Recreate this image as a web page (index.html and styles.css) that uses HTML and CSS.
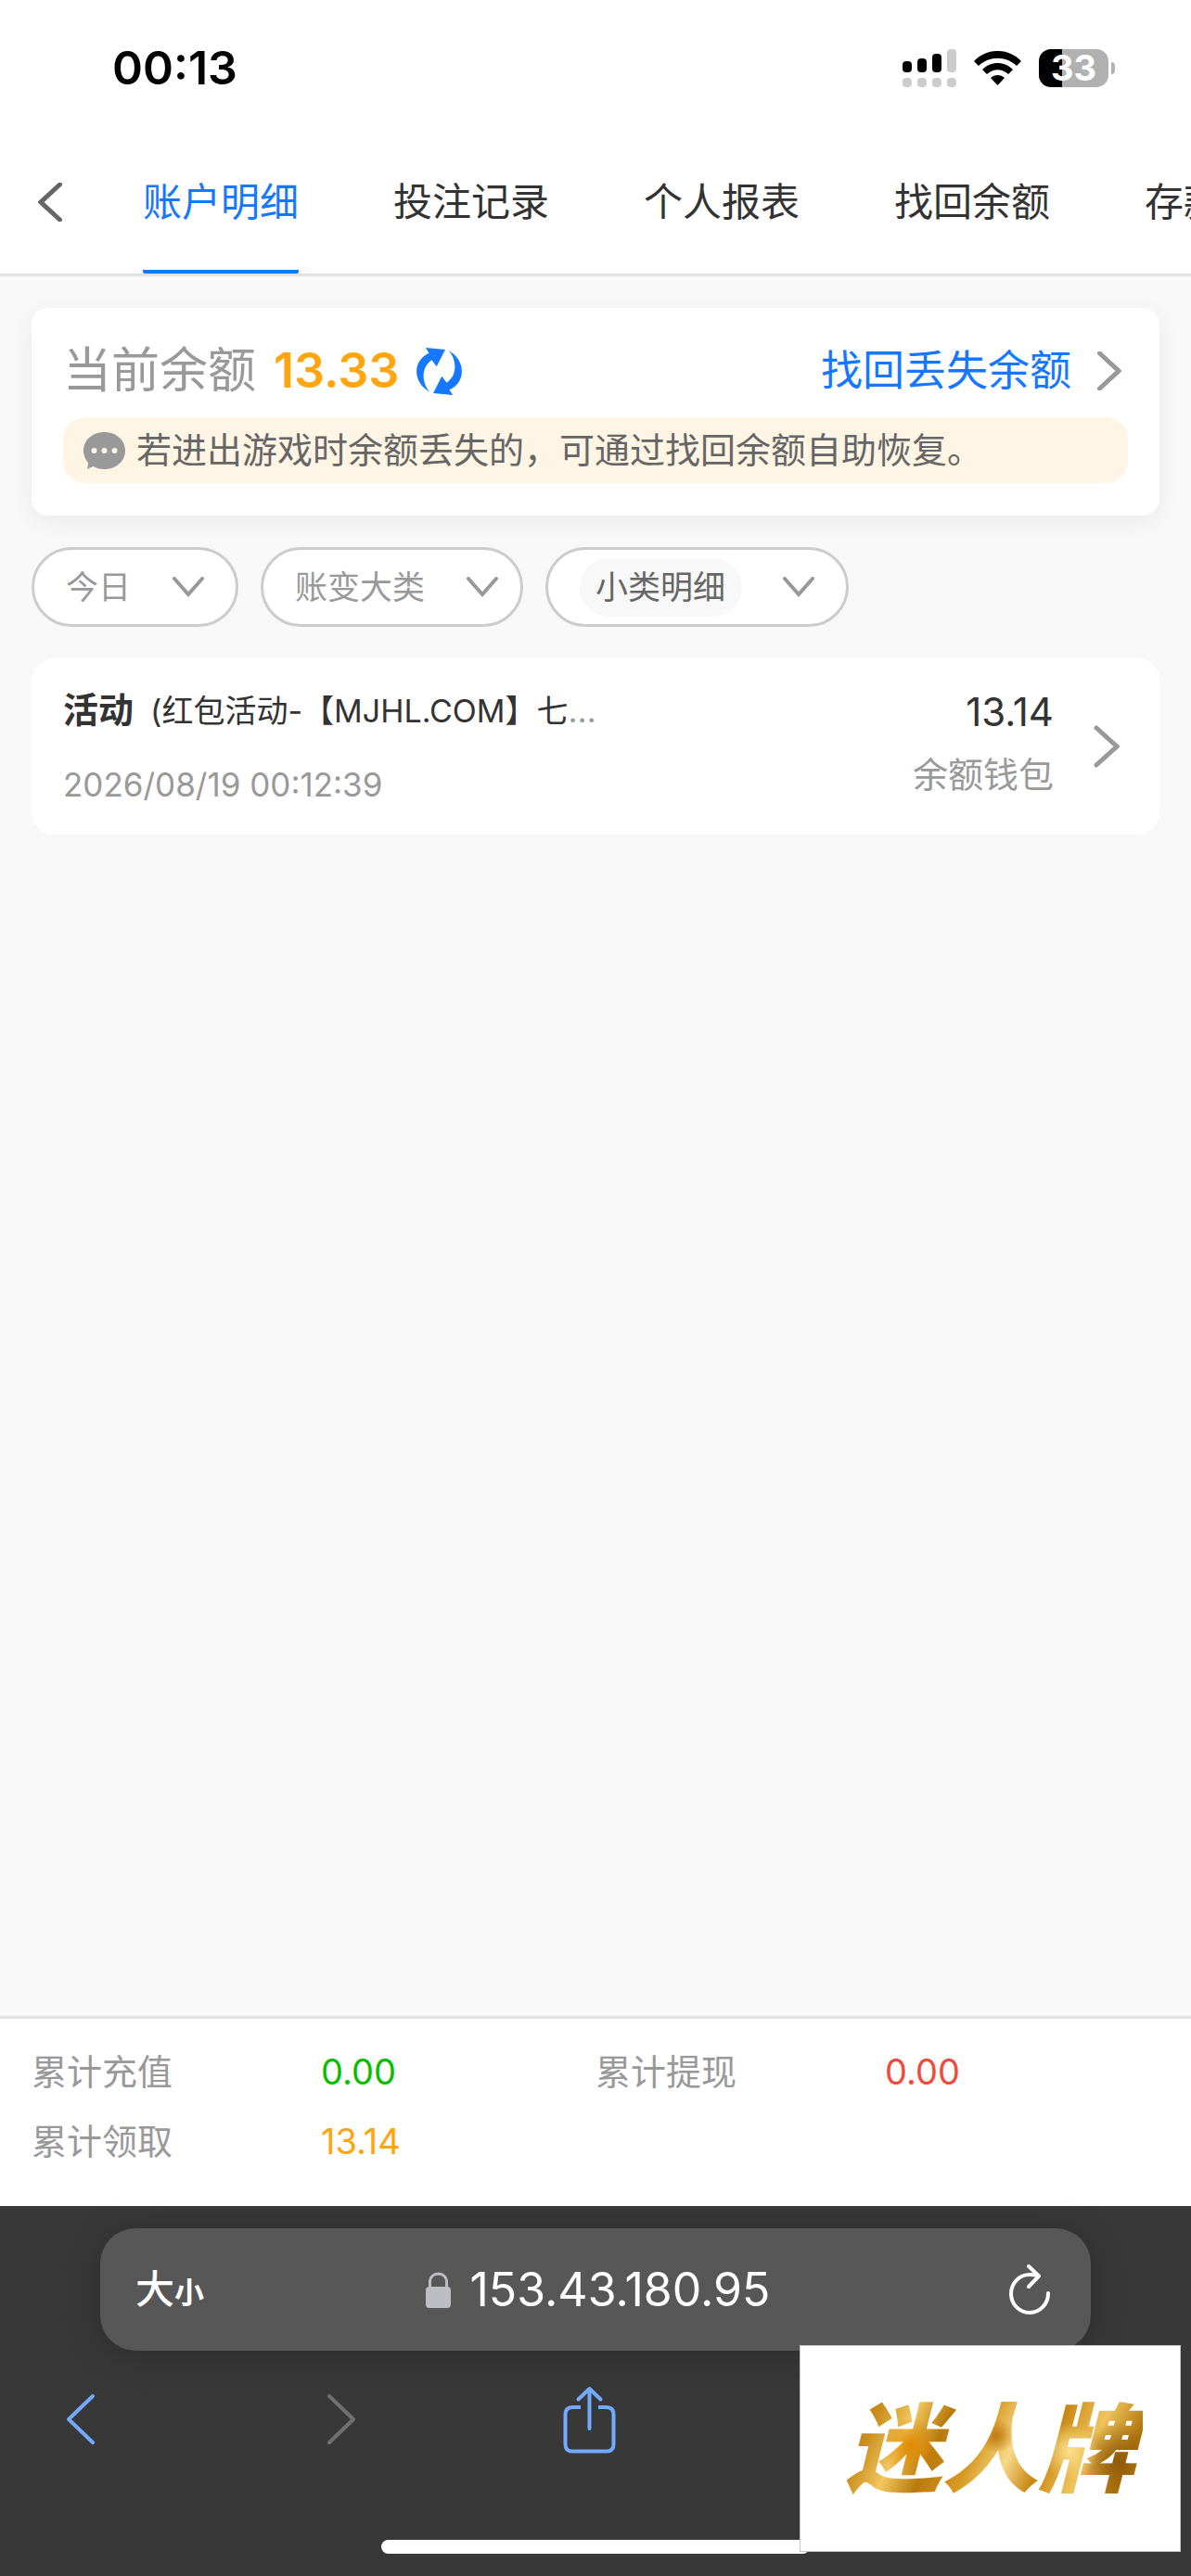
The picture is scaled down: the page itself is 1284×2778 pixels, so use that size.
FILE: index.html
```
<!DOCTYPE html>
<html lang="zh-CN">
<head>
  <meta charset="UTF-8">
  <meta name="viewport" content="width=device-width, initial-scale=1.0">
  <title>账户明细</title>
  <link rel="stylesheet" href="styles.css">
</head>
<body>

<header class="header">
  <div class="status-bar">
    <span class="time">00:13</span>
    <div class="status-icons">
      <svg width="58" height="41" viewBox="0 0 58 41">
        <rect x="0" y="13" width="10" height="12" rx="4"/>
        <rect x="16" y="10" width="10" height="15" rx="4"/>
        <rect x="32" y="5" width="10" height="20" rx="4"/>
        <g fill="#ccc">
          <rect x="48" y="0" width="10" height="25" rx="4"/>
          <rect x="0" y="31" width="10" height="10" rx="4"/>
          <rect x="16" y="31" width="10" height="10" rx="4"/>
          <rect x="32" y="31" width="10" height="10" rx="4"/>
          <rect x="48" y="31" width="10" height="10" rx="4"/>
        </g>
      </svg>
      <svg class="wifi" width="51" height="37" viewBox="0 0 51 37">
        <path d="M0 11C14-3.700 37-3.700 51 11L46 16C34.500 5 16.500 5 5 16Z"/>
        <path d="M9 20C18 10.500 33 10.500 42 20L37 25C30.500 18.500 20.500 18.500 14 25Z"/>
        <path d="M18 29C22 25 29 25 33 29L25.500 37Z"/>
      </svg>
      <div class="battery"><span>33</span></div>
    </div>
  </div>
  <nav class="tabs">
    <button class="back" type="button" aria-label="返回">
      <svg width="26" height="42" viewBox="0 0 26 42"><path d="M23.500 2L3 21L23.500 40"/></svg>
    </button>
    <a class="tab active" href="#">账户明细</a>
    <a class="tab" href="#">投注记录</a>
    <a class="tab" href="#">个人报表</a>
    <a class="tab" href="#">找回余额</a>
    <a class="tab" href="#">存款记录</a>
  </nav>
</header>

<main class="content">
  <section class="balance-card">
    <div class="balance-row">
      <span class="balance-label">当前余额</span>
      <span class="balance-value">13.33</span>
      <button class="refresh" type="button" aria-label="刷新">
        <svg width="49" height="51" viewBox="0 0 49 51" fill="#1677ff">
          <path d="M9.800 0L31 2L21.700 20.300L16.400 13.300C4 22 6 39 14.300 47.700C-4 38-5 14 13.500 5.700Z"/>
          <path transform="rotate(180 24.500 25.500)" d="M9.800 0L31 2L21.700 20.300L16.400 13.300C4 22 6 39 14.300 47.700C-4 38-5 14 13.500 5.700Z"/>
        </svg>
      </button>
      <a class="find-link" href="#">
        找回丢失余额
        <svg class="arrow" width="26" height="42" viewBox="0 0 26 42"><path d="M2.500 2L23 21L2.500 40"/></svg>
      </a>
    </div>
    <p class="notice">
      <svg width="45" height="40" viewBox="0 0 45 40">
        <path fill="#999" d="M22.500 0C35 0 45 8.500 45 20S35 40 22.500 40C18 40 14 39 10.500 37Q7 38 4 40Q5 36 5 33C2 29.500 0 25 0 20C0 8.500 10 0 22.500 0Z"/>
        <g fill="#fff5e5"><circle cx="11.500" cy="20" r="3"/><circle cx="22.500" cy="20" r="3"/><circle cx="33.500" cy="20" r="3"/></g>
      </svg>
      <span>若进出游戏时余额丢失的，可通过找回余额自助恢复。</span>
    </p>
  </section>

  <form class="filters">
    <div class="filter">
      <select aria-label="日期"><option>今日</option></select>
      <svg class="arrow" width="34" height="22" viewBox="0 0 34 22"><path d="M2 2L17 19L32 2"/></svg>
    </div>
    <div class="filter filter-type">
      <select aria-label="账变大类"><option>账变大类</option></select>
      <svg class="arrow" width="34" height="22" viewBox="0 0 34 22"><path d="M2 2L17 19L32 2"/></svg>
    </div>
    <div class="filter filter-tag">
      <select aria-label="小类明细"><option>小类明细</option></select>
      <svg class="arrow" width="34" height="22" viewBox="0 0 34 22"><path d="M2 2L17 19L32 2"/></svg>
    </div>
  </form>

  <a class="record" href="#">
    <div class="record-info">
      <div class="record-title"><b>活动</b><span class="desc">(红包活动-【MJHL.COM】七</span><span>…</span></div>
      <div class="record-time">2026/08/19 00:12:39</div>
    </div>
    <div class="record-amount">
      <div class="amount">13.14</div>
      <div class="wallet">余额钱包</div>
    </div>
    <svg class="arrow" width="28" height="46" viewBox="0 0 28 46"><path d="M3 3L25 23L3 43"/></svg>
  </a>
</main>

<dl class="totals">
  <div class="total"><dt>累计充值</dt><dd class="green">0.00</dd></div>
  <div class="total"><dt>累计提现</dt><dd class="red">0.00</dd></div>
  <div class="total"><dt>累计领取</dt><dd class="orange">13.14</dd></div>
</dl>

<footer class="browser">
  <div class="address-bar">
    <button class="text-size" type="button">大<small>小</small></button>
    <button class="domain" type="button">
      <svg width="27" height="39" viewBox="0 0 27 39">
        <rect y="16" width="27" height="23" rx="4" fill="#bdbdc4"/>
        <path d="M4.500 18V11C4.500-1 22.500-1 22.500 11V18" fill="none" stroke="#bdbdc4" stroke-width="3"/>
      </svg>
      153.43.180.95
    </button>
    <button class="reload" type="button" aria-label="重新载入">
      <svg width="44" height="54" viewBox="0 0 44 54"><path d="M31 12Q26 11 22 11A20 20.500 0 1 0 42 31M21 2L32 12.500L21 24"/></svg>
    </button>
  </div>
  <div class="toolbar">
    <button type="button" aria-label="后退">
      <svg width="32" height="56" viewBox="0 0 32 56"><path d="M29 3L3 28L29 53"/></svg>
    </button>
    <button class="disabled" type="button" aria-label="前进" disabled>
      <svg width="32" height="56" viewBox="0 0 32 56"><path d="M3 3L29 28L3 53"/></svg>
    </button>
    <button type="button" aria-label="分享">
      <svg width="57" height="73" viewBox="0 0 57 73"><path d="M28.500 46V3M16.500 14.500L28.500 3L40.500 14.500" /><path stroke-linecap="butt" d="M19 23H10Q2.500 23 2.500 31V63Q2.500 70.500 10 70.500H47Q54.500 70.500 54.500 63V31Q54.500 23 47 23H38"/></svg>
    </button>
  </div>
  <div class="home-indicator"></div>
  <div class="brand"><span>迷人牌</span></div>
</footer>

</body>
</html>
```

FILE: styles.css
```
* {
  box-sizing: border-box;
}

body {
  margin: 0;
  min-height: 100vh;
  display: flex;
  flex-direction: column;
  overflow-x: hidden;
  background: #f8f8f8;
  color: #333;
  font-family: Inter, "Noto Sans CJK SC", sans-serif;
  font-size: 38px;
  line-height: 1.2;
}

a {
  color: inherit;
  text-decoration: none;
}

button,
select {
  padding: 0;
  border: none;
  background: none;
  color: inherit;
  font: inherit;
}

svg {
  display: block;
  flex: none;
}

.arrow {
  fill: none;
  stroke: #999;
  stroke-width: 5;
  stroke-linecap: round;
}

/* header */
.header {
  background: #fff;
  border-bottom: 3px solid #e2e2e2;
}

.status-bar {
  display: flex;
  justify-content: space-between;
  align-items: center;
  height: 140px;
  padding: 6px 82px 0 121px;
  color: #000;
}

.time {
  font-size: 50px;
  font-weight: 600;
}

.status-icons {
  display: flex;
  align-items: center;
  gap: 19px;
}

.battery {
  position: relative;
  width: 75px;
  height: 41px;
  margin-right: 7px;
  border-radius: 13px;
  background: linear-gradient(to right, #000 33%, #b1b1b1 33%);
  color: #fff;
  font-size: 38px;
  font-weight: 700;
  line-height: 41px;
  text-align: center;
}

.battery::after {
  content: "";
  position: absolute;
  right: -7px;
  top: 14px;
  width: 4px;
  height: 13px;
  border-radius: 0 4px 4px 0;
  background: #b1b1b1;
}

.tabs {
  display: flex;
  gap: 102px;
  height: 155px;
  padding-left: 41px;
  overflow: hidden;
}

.back {
  margin-right: -15px;
}

.back svg {
  fill: none;
  stroke: #666;
  stroke-width: 5;
  stroke-linecap: round;
}

.tab {
  flex: none;
  border-bottom: 4px solid transparent;
  border-radius: 2px;
  font-size: 42px;
  line-height: 155px;
}

.tab.active {
  border-color: #1677ff;
  color: #1677ff;
}

/* content */
.content {
  flex: 1;
  display: flex;
  flex-direction: column;
  gap: 34px;
  padding: 34px;
}

.balance-card {
  padding: 26px 34px 35px;
  border-radius: 18px;
  background: #fff;
  box-shadow: 0 6px 24px rgba(0, 0, 0, 0.06);
}

.balance-row {
  display: flex;
  align-items: center;
  height: 84px;
}

.balance-label {
  margin-right: 19px;
  color: #999;
  font-size: 52px;
}

.balance-value {
  margin-right: 19px;
  color: #ffa50f;
  font-size: 52px;
  font-weight: 600;
}

.find-link {
  display: flex;
  align-items: center;
  gap: 28px;
  margin-left: auto;
  padding-right: 7px;
  color: #1677ff;
  font-size: 45px;
}

.notice {
  display: flex;
  align-items: center;
  gap: 12px;
  height: 71px;
  margin: 8px 0 0;
  padding: 0 22px;
  border-radius: 24px;
  background: #fff5e5;
  color: #666;
}

.filters {
  display: flex;
  gap: 24px;
}

.filter {
  display: flex;
  align-items: center;
  gap: 44px;
  height: 86px;
  padding: 0 34px;
  border: 3px solid #ccc;
  border-radius: 43px;
  background: #fff;
  color: #999;
  font-size: 35px;
}

.filter .arrow {
  stroke-width: 4;
}

.filter select {
  appearance: none;
  height: 63px;
}

.filter-type {
  padding-right: 24px;
}

.filter-tag select {
  padding: 0 17px;
  border-radius: 32px;
  background: #f8f8f8;
  color: #666;
}

.record {
  display: flex;
  padding: 30px 43px 30px 34px;
  border-radius: 24px;
  background: #fff;
}

.record-info {
  flex: 1;
  color: #999;
  font-size: 35px;
}

.record-title {
  margin-bottom: 30px;
  line-height: 50px;
}

.record-title b {
  margin-right: 18px;
  color: #333;
  font-size: 38px;
}

.desc {
  color: #333;
  font-size: 34px;
}

.record-time {
  line-height: 48px;
}

.record-amount {
  margin-right: 43px;
  text-align: right;
}

.amount {
  margin-bottom: 14px;
  font-size: 42px;
  line-height: 56px;
}

.wallet {
  color: #999;
  line-height: 50px;
}

.record .arrow {
  align-self: center;
}

/* totals */
.totals {
  display: grid;
  grid-template-columns: 1fr 1fr;
  margin: 0;
  padding: 20px 34px 32px;
  border-top: 3px solid #e2e2e2;
  background: #fff;
  line-height: 75px;
}

.total {
  display: flex;
}

.total dt {
  width: 312px;
  color: #999;
}

.total dd {
  margin: 0;
}

.green { color: #09be00; }
.red { color: #ee4b3c; }
.orange { color: #ffa50f; }

/* browser bar */
.browser {
  position: relative;
  padding: 24px 0;
  background: #383838;
  color: #fff;
}

.address-bar {
  display: grid;
  grid-template-columns: 1fr auto 1fr;
  align-items: center;
  height: 132px;
  margin: 0 108px;
  padding: 0 32px 0 38px;
  border-radius: 38px;
  background: #575757;
  box-shadow: 0 4px 40px rgba(0, 0, 0, 0.2);
}

.text-size {
  justify-self: start;
  font-size: 42px;
  font-weight: 500;
}

.text-size small {
  font-size: 32px;
  font-weight: 700;
}

.domain {
  display: flex;
  align-items: center;
  gap: 20px;
  font-size: 50px;
}

.reload {
  justify-self: end;
  margin-right: 12px;
}

.reload svg,
.toolbar svg {
  fill: none;
  stroke: currentColor;
  stroke-width: 4;
  stroke-linecap: round;
  stroke-linejoin: round;
}

.toolbar {
  display: grid;
  grid-template-columns: 22fr 20fr 53fr;
  justify-items: start;
  align-items: center;
  height: 148px;
  padding-left: 71px;
  color: #74aaff;
}

.toolbar .disabled {
  color: #707070;
}

.home-indicator {
  width: 36%;
  height: 15px;
  margin: 56px auto 0;
  border-radius: 8px;
  background: #fff;
}

.brand {
  position: absolute;
  right: 11px;
  bottom: 26px;
  display: flex;
  align-items: center;
  justify-content: center;
  width: 411px;
  height: 223px;
  border: 1px solid #c8c8c8;
  background: #fff;
}

.brand span {
  padding: 0 8px;
  background:
    radial-gradient(circle at 24% 48%, #e08a00 0, transparent 12%),
    radial-gradient(circle at 52% 38%, #c07a10 0, transparent 10%),
    radial-gradient(circle at 76% 52%, #fbe08a 0, transparent 12%),
    radial-gradient(circle at 92% 62%, #8f5a08 0, transparent 14%),
    linear-gradient(115deg, #a8700c 0, #c98e1c 14%, #f2c760 24%, #b87a0c 34%, #d79a22 46%, #f7d98a 56%, #c88612 66%, #f0c45c 78%, #b1760e 90%, #dca83a 100%);
  -webkit-background-clip: text;
  background-clip: text;
  color: transparent;
  font-size: 104px;
  font-style: italic;
  font-weight: 900;
  line-height: 120px;
}
```
